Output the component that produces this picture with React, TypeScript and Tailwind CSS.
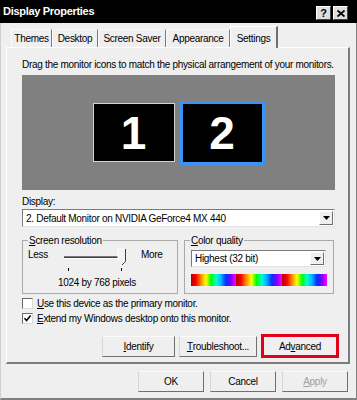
import React from 'react';

const TABS = [
  { label: 'Themes', w: 'w-[41px]' },
  { label: 'Desktop', w: 'w-[46px]' },
  { label: 'Screen Saver', w: 'w-[68px]' },
  { label: 'Appearance', w: 'w-[64px]' },
];

function U({ children }: { children: React.ReactNode }) {
  return <span className="underline underline-offset-[1px]">{children}</span>;
}

function TitleBtn({ children }: { children: React.ReactNode }) {
  return (
    <div className="w-[15px] h-[14px] flex items-center justify-center bg-[#dedede] border border-t-white border-l-white border-r-[#404040] border-b-[#404040] text-black font-bold text-[11px] leading-none">
      {children}
    </div>
  );
}

function Btn({
  children,
  className = '',
  disabled = false,
}: {
  children: React.ReactNode;
  className?: string;
  disabled?: boolean;
}) {
  return (
    <div
      className={`h-[21px] flex items-center justify-center bg-[#efefef] border border-t-[#fbfbfb] border-l-[#d6d6d6] border-r-[#707070] border-b-[#707070] ${
        disabled ? 'text-[#a0a0a0]' : ''
      } ${className}`}
    >
      {children}
    </div>
  );
}

function Dropdown({ value, className = '' }: { value: string; className?: string }) {
  return (
    <div
      className={`flex items-center bg-white border border-t-[#7a7a7a] border-l-[#7a7a7a] border-r-[#e4e4e4] border-b-[#e4e4e4] ${className}`}
    >
      <span className="flex-1 pl-[3px] truncate">{value}</span>
      <div className="w-[14px] self-stretch m-[1px] bg-[#efefef] border border-t-white border-l-white border-r-[#6f6f6f] border-b-[#6f6f6f] flex items-center justify-center">
        <svg width="7" height="4" viewBox="0 0 7 4">
          <path d="M0 0h7L3.5 4z" fill="black" />
        </svg>
      </div>
    </div>
  );
}

function Check({ checked, children }: { checked?: boolean; children: React.ReactNode }) {
  return (
    <div className="flex items-center h-[13px]">
      <div className="w-[11px] h-[11px] bg-white border border-t-[#6a6a6a] border-l-[#6a6a6a] border-r-[#dadada] border-b-[#dadada] flex items-center justify-center">
        {checked && (
          <svg width="9" height="9" viewBox="0 0 9 9">
            <path d="M1.5 4.2 L3.6 6.5 L7.6 1.6" stroke="black" strokeWidth="1.6" fill="none" />
          </svg>
        )}
      </div>
      <span className="ml-[4px]">{children}</span>
    </div>
  );
}

function MonitorArea() {
  return (
    <div className="mt-[4px] h-[115px] bg-[#808080] flex items-center justify-center gap-[5px]">
      <div className="w-[82px] h-[59px] bg-black border border-[#d4d4d4] flex items-center justify-center">
        <span className="text-white font-bold text-[46px] leading-none tracking-normal">1</span>
      </div>
      <div className="w-[85px] h-[64px] bg-black border-[3px] border-[#3a93f5] flex items-center justify-center">
        <span className="text-white font-bold text-[46px] leading-none tracking-normal">2</span>
      </div>
    </div>
  );
}

function ResolutionBox() {
  return (
    <fieldset className="w-[156px] h-[60px] min-w-0 border border-[#a9a9a9]">
      <legend className="ml-[5px] px-[1px]">
        <U>S</U>creen resolution
      </legend>
      <div className="flex mt-[1px] h-[24px]">
        <span className="w-[41px] pl-[5px] shrink-0">Less</span>
        <svg width="70" height="24" viewBox="0 0 70 24" className="shrink-0">
          <rect x="0" y="8" width="57" height="1" fill="#7a7a7a" />
          <rect x="0" y="9" width="57" height="1" fill="#404040" />
          <rect x="0" y="10" width="57" height="1" fill="#ffffff" />
          <polygon points="54,1 61,1 61,13 57.5,16.5 54,13" fill="#f2f2f2" />
          <polyline points="54,13 54,1 61,1" stroke="#ffffff" fill="none" />
          <polyline points="61.5,1 61.5,13.5 58,17" stroke="#404040" fill="none" />
          <line x1="4.5" y1="20" x2="4.5" y2="23" stroke="#000" />
          <line x1="57.5" y1="20" x2="57.5" y2="23" stroke="#000" />
        </svg>
        <span className="pl-[7px]">More</span>
      </div>
      <div className="mt-[4px] text-center pr-[6px]">1024 by 768 pixels</div>
    </fieldset>
  );
}

function ColorBox() {
  return (
    <fieldset className="w-[150px] h-[60px] min-w-0 border border-[#a9a9a9]">
      <legend className="ml-[5px] px-[1px]">
        <U>C</U>olor quality
      </legend>
      <Dropdown value="Highest (32 bit)" className="ml-[6px] mt-[3px] w-[135px] h-[17px]" />
      <div className="ml-[6px] mt-[7px] w-[136px] h-[12px] flex">
        <div className="flex-1 bg-[linear-gradient(to_right,#b00000,#ff0000,#ff8c00,#ffff00,#00ff00,#00ffd0,#00b0ff,#0030ff,#8000ff,#ff00ff)]" />
        <div className="flex-1 bg-[linear-gradient(to_right,#b00000,#ff0000,#ff8c00,#ffff00,#00ff00,#00ffd0,#00b0ff,#0030ff,#8000ff,#ff00ff)]" />
        <div className="flex-1 bg-[linear-gradient(to_right,#b00000,#ff0000,#ff8c00,#ffff00,#00ff00,#00ffd0,#00b0ff,#0030ff,#8000ff,#ff00ff)]" />
      </div>
    </fieldset>
  );
}

export default function App() {
  return (
    <div className="w-[357px] h-[400px] overflow-hidden bg-[#efefef] text-black font-['Liberation_Sans',Arial,sans-serif] text-[10px] tracking-[-0.3px] leading-[13px] flex flex-col">
      {/* title bar */}
      <div className="h-[23px] shrink-0 bg-black flex items-center justify-between pl-[3px] pr-[9px]">
        <span className="text-white font-bold text-[11px] leading-none">Display Properties</span>
        <div className="flex gap-[2px] mt-[3px]">
          <TitleBtn>?</TitleBtn>
          <TitleBtn>
            <svg width="8" height="7" viewBox="0 0 8 7">
              <path d="M0.5 0.5 L7.5 6.5 M7.5 0.5 L0.5 6.5" stroke="black" strokeWidth="1.8" />
            </svg>
          </TitleBtn>
        </div>
      </div>

      <div className="flex-1 flex flex-col border-l border-l-[#cfcfcf] border-r border-r-[#808080] border-b-2 border-b-[#808080]">
        {/* tabs */}
        <div className="h-[24px] shrink-0 flex items-end pl-[10px]">
          {TABS.map((t) => (
            <div
              key={t.label}
              className={`${t.w} h-[18px] flex items-center justify-center border-t border-l border-t-[#fafafa] border-l-[#fafafa] border-r border-r-[#7a7a7a]`}
            >
              {t.label}
            </div>
          ))}
          <div className="relative z-10 -mb-px w-[48px] h-[22px] bg-[#efefef] border-t border-l border-t-white border-l-white border-r-2 border-r-[#6f6f6f] flex justify-center pt-[5px]">
            Settings
          </div>
        </div>

        {/* tab panel */}
        <div className="ml-[5px] mr-[6px] border-t border-l border-t-white border-l-white border-r-2 border-b-2 border-r-[#7c7c7c] border-b-[#7c7c7c] pl-[15px] pr-[13px] pb-[4px] flex flex-col">
          <p className="mt-[10px]">
            Drag the monitor icons to match the physical arrangement of your monitors.
          </p>
          <MonitorArea />
          <div className="mt-[5px]">Display:</div>
          <Dropdown
            value="2. Default Monitor on NVIDIA GeForce4 MX 440"
            className="mt-[1px] h-[18px]"
          />
          <div className="mt-[7px] flex gap-[6px]">
            <ResolutionBox />
            <ColorBox />
          </div>
          <div className="mt-[3px] flex flex-col gap-[2px]">
            <Check>
              <U>U</U>se this device as the primary monitor.
            </Check>
            <Check checked>
              <U>E</U>xtend my Windows desktop onto this monitor.
            </Check>
          </div>
          <div className="mt-[9px] h-[24px] -mr-[4px] flex items-center justify-end gap-[4px]">
            <Btn className="w-[73px]">
              <U>I</U>dentify
            </Btn>
            <Btn className="w-[78px]">
              <U>T</U>roubleshoot...
            </Btn>
            <div className="w-[78px] h-[24px] border-[3px] border-[#e3001b] bg-[#efefef] flex items-center justify-center">
              Ad<U>v</U>anced
            </div>
          </div>
        </div>

        {/* dialog buttons */}
        <div className="mt-[7px] pr-[8px] flex justify-end gap-[6px]">
          <Btn className="w-[66px]">OK</Btn>
          <Btn className="w-[66px]">Cancel</Btn>
          <Btn className="w-[66px]" disabled>
            <U>A</U>pply
          </Btn>
        </div>
      </div>
    </div>
  );
}
